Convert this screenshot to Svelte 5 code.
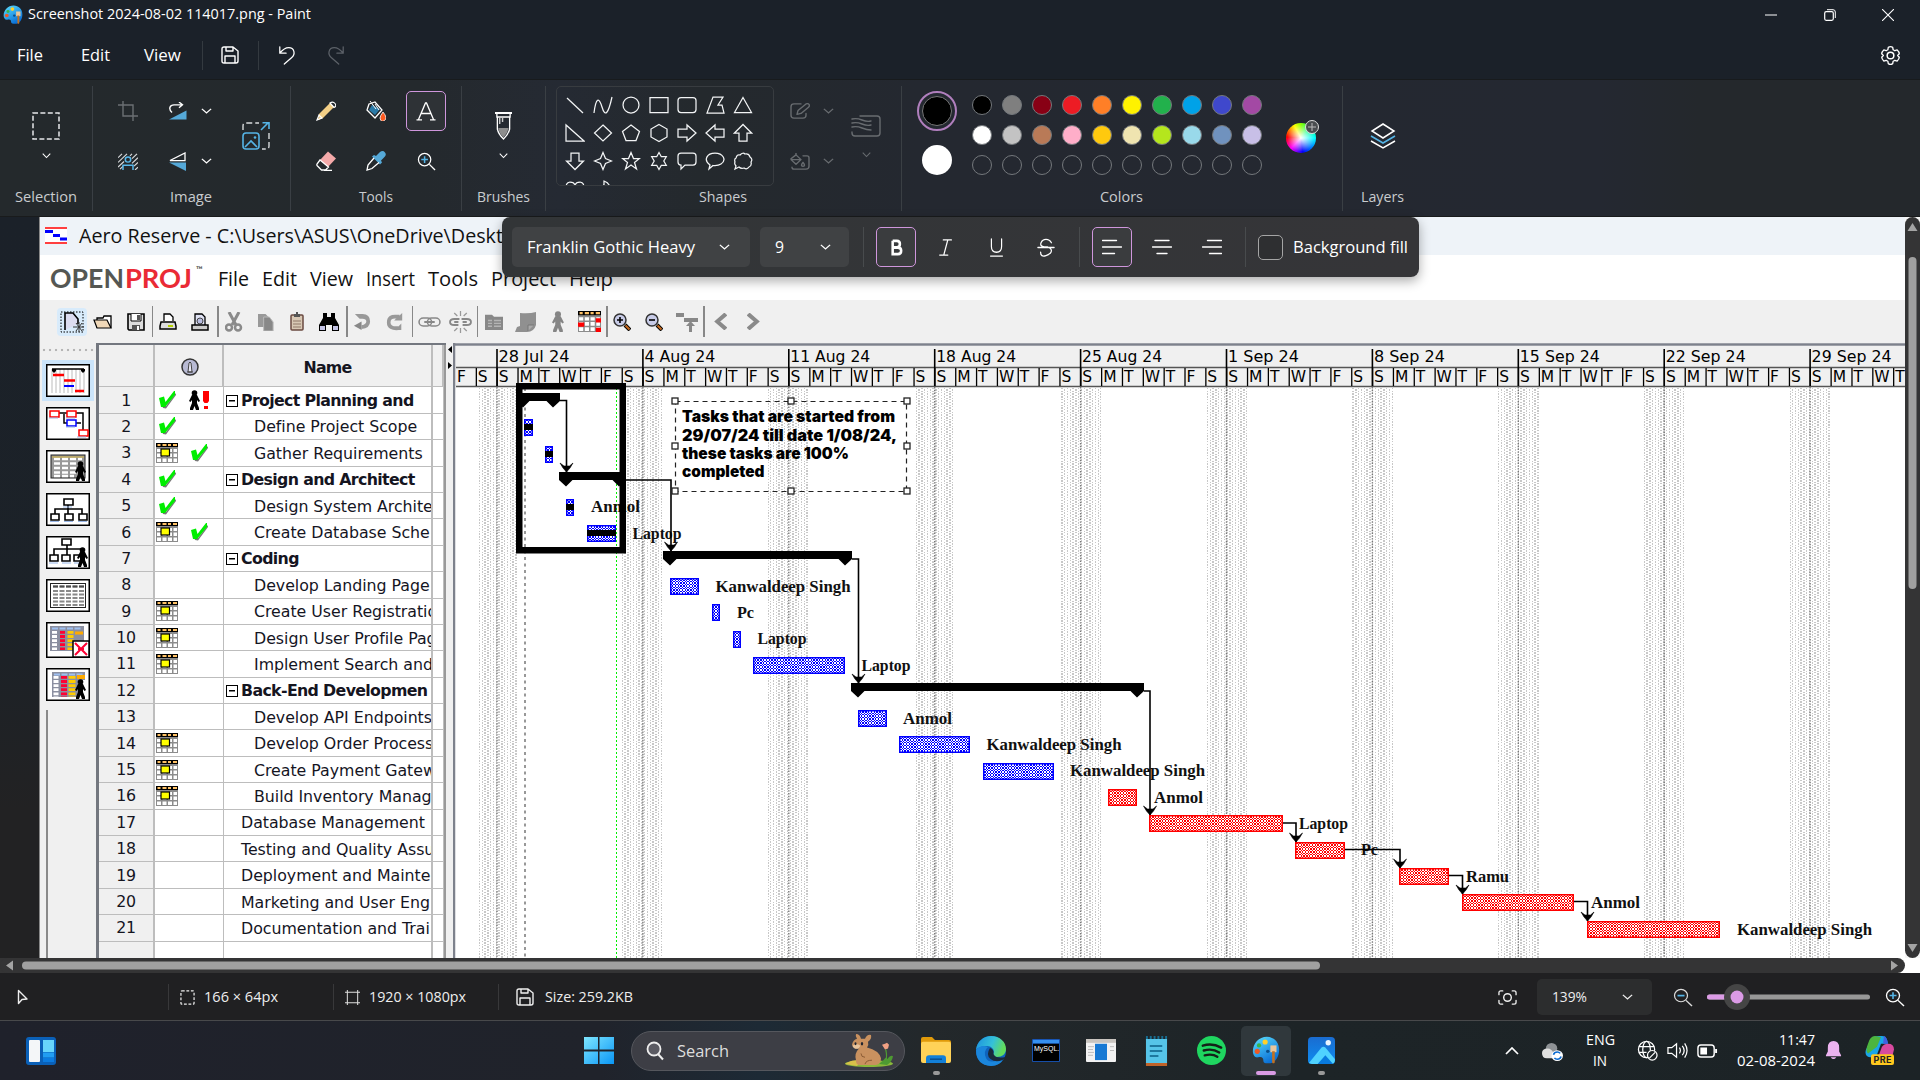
<script>
  const line = (d, extra = '') => `<path d="${d}" fill="none" stroke="currentColor" stroke-width="1.4" stroke-linejoin="round" stroke-linecap="round" ${extra}/>`;
  const person = (x, y, c = '#000') => `<g transform="translate(${x} ${y})" fill="${c}"><circle cx="5.5" cy="3" r="2.8"/><path d="M3 5h5l3 6-1.500 1-1.500-2v3l2 5v2H7l-1.500-4L4 20H1v-2l2-5v-3l-1.500 2L0 11z"/></g>`;
  const palette = `<defs><linearGradient id="pal" x1="0" y1="0" x2="0.600" y2="1"><stop offset="0" stop-color="#5ce1ff"/><stop offset="1" stop-color="#0a6fd6"/></linearGradient></defs><path d="M17 1C8 1 1 9 1 18c0 5 3 8 6 7 4-1 6 0 6 4 0 3 3 3 6 3 8 0 12-8 12-16C31 7 25 1 17 1z" fill="url(#pal)"/><circle cx="15" cy="7" r="3" fill="#ffd028"/><circle cx="8" cy="11" r="2.500" fill="#38b54a"/><circle cx="6" cy="18" r="3" fill="#ee5a24"/><circle cx="18" cy="18" r="2" fill="#0b4f8a"/><path d="M21 11h7v8h-7z" fill="#e8c69c"/><path d="M23 18h3v13q-1.500 2-3 0z" fill="#c07022"/>`;
  const save = line('M2 4q0-2 2-2h9l5 4v10q0 2-2 2H4q-2 0-2-2zM6 2v4h7V2M5 18v-7h10v7');
  const gridCal = (sel) => `<rect width="22" height="20" fill="#8c8c8c"/><rect width="22" height="4" fill="#000"/><path d="M1.500 2h3M6.500 2h4M12 2h3M17 2h4" stroke="#ffc266" stroke-width="2"/><path d="M1 6h4v3H1zM6.500 6h4v3h-4zM12 6h4v3h-4zM17.500 6h3.500v3h-3.500zM1 10.500h4v3.500H1zM6.500 10.500h4v3.500h-4zM12 10.500h4v3.500h-4zM17.500 10.500h3.500v3.500h-3.500zM1 15.500h4v3.500H1zM6.500 15.500h4v3.500h-4zM12 15.500h4v3.500h-4zM17.500 15.500h3.500v3.500h-3.500z" fill="#fff"/>${sel}`;

  const icons = {
    paint: ['0 0 32 34', palette],
    save: ['0 0 20 20', save],
    undo: ['0 0 20 22', line('M2 2v7h7M2 9Q7 3 12 3c6 0 8 7 3 11l-8 7', 'stroke-width="1.6"')],
    redo: ['0 0 20 22', line('M18 2v7h-7M18 9Q13 3 8 3C2 3 0 10 5 14l8 7')],
    gear: ['0 0 22 22', line('M8.700 2.500Q11 1 13.300 2.500l.500 2.500 1.800 1 2.400-.800q2 1.800 2.200 4L18.500 11l1.700 1.800q-.200 2.200-2.200 4l-2.400-.800-1.800 1-.500 2.500Q11 21 8.700 19.500L8.200 17l-1.800-1-2.400.800q-2-1.800-2.200-4L3.500 11 1.800 9.200q.200-2.200 2.200-4l2.400.800 1.800-1z') + '<circle cx="11" cy="11" r="3.500" fill="none" stroke="currentColor" stroke-width="1.600"/>'],
    min: ['0 0 12 12', '<path d="M0 6h12" stroke="currentColor"/>'],
    max: ['0 0 12 12', '<rect x=".700" y="2.700" width="8.600" height="8.600" rx="1.500" fill="none" stroke="currentColor" stroke-width="1.200"/><path d="M3 .700h6q2.300 0 2.300 2.300v6" fill="none" stroke="currentColor"/>'],
    close: ['0 0 12 12', '<path d="M0 0l12 12M12 0L0 12" stroke="currentColor" stroke-width="1.100"/>'],
    chev: ['0 0 10 6', '<path d="M.800 .800L5 5 9.200 .800" fill="none" stroke="currentColor" stroke-width="1.200"/>'],
    up: ['0 0 14 8', '<path d="M1 7l6-6 6 6" fill="none" stroke="currentColor" stroke-width="1.700"/>'],
    select: ['0 0 28 28', '<rect x="1" y="1" width="26" height="26" fill="none" stroke="#e6e8ea" stroke-width="1.500" stroke-dasharray="5 2.400"/>'],
    crop: ['0 0 20 20', '<path d="M5 0v15h15M0 4h15v16" fill="none" stroke="#6b6f73" stroke-width="1.400"/>'],
    removebg: ['0 0 20 18', '<path d="M0 5l4-4M0 10l9-9M0 15l6-6M2 17l4-4M12 3l2-2M14 6l5-5M14 11l6-6M16 14l4-4M17 18l3-3" stroke="#d8dadc" stroke-width="1.200"/><circle cx="10" cy="7" r="2.700" fill="#24292d" stroke="#59b8ea" stroke-width="1.500"/><path d="M5 18v-5h10v5" fill="#24292d" stroke="#59b8ea" stroke-width="1.500"/>'],
    rotate: ['0 0 18 20', '<path d="M0 18.500h17.500V9z" fill="#55a9d8"/><path d="M3 11C-1 7 1 3 5 3h8M10 0l3.500 3L10 6" fill="none" stroke="#fff" stroke-width="1.400"/>'],
    flip: ['0 0 18 20', '<path d="M1 9h15V1z" fill="none" stroke="#fff" stroke-width="1.300"/><path d="M0 11h17v9z" fill="#55a9d8"/>'],
    resize: ['0 0 28 28', '<path d="M1 8V4q0-3 3-3h13M27 11v13q0 3-3 3h-4" fill="none" stroke="#d8dadc" stroke-width="1.400" stroke-dasharray="6 3"/><path d="M19 8l8-8M20.500 .800H27V7" fill="none" stroke="#55b4e6" stroke-width="1.600"/><rect x="1" y="11" width="16" height="16" rx="3" fill="none" stroke="#55b4e6" stroke-width="1.600"/><path d="M3 25l6-6 6 6" fill="none" stroke="#55b4e6" stroke-width="1.600"/><circle cx="13" cy="15.500" r="1.300" fill="#55b4e6"/>'],
    pencil: ['0 0 20 20', '<path d="M3 13L14 2l4 4L7 17l-5 2z" fill="#f3cf86"/><path d="M14 2q3-2 5 .500t-1 4zM1 19l2-5 3 3z" fill="none" stroke="#fff" stroke-width="1.200"/>'],
    bucket: ['0 0 20 20', '<path d="M3 3l6-2 7 8-7 8-8-8z" fill="none" stroke="#fff" stroke-width="1.300"/><path d="M6 4l-3 5 6 5 5-6z" fill="#2a7aa8"/><path d="M4 0l6 8M9 3l4 6" stroke="#fff"/><path d="M17 11q5 6 1.500 8.500T14 17q0-2 3-6z" fill="#ff5a1f" stroke="#fff" stroke-width=".800"/>'],
    text: ['0 0 20 20', '<path d="M2.500 18.500L9.500 2h1l7 16.500M5.500 12.500h9M.500 18.800h5.500M14 18.800h5.500" fill="none" stroke="#fff" stroke-width="1.300"/>'],
    eraser: ['0 0 20 20', '<path d="M4 9L12 0.600 20 7.500 12 16z" fill="#f4a9a9"/><path d="M4 9l-3 4q-.500 1 .500 2l4 4h4l3-3zM8 19.300h8" fill="none" stroke="#fff" stroke-width="1.300"/>'],
    picker: ['0 0 20 20', '<path d="M10 5l4-4q3-2 5 .500t-1 5l-3 3 1 2-2 2-8-8 2-1.500z" fill="#55a9d8"/><path d="M8 7L2 14l-1 5 5-1.500 7-6" fill="none" stroke="#fff" stroke-width="1.300"/>'],
    zoomin: ['0 0 20 20', '<circle cx="8" cy="8" r="6.500" fill="none" stroke="#fff" stroke-width="1.300"/><path d="M13 13l6 6" stroke="#fff" stroke-width="1.400"/><path d="M4.500 8h7M8 4.500v7" stroke="#55b4e6" stroke-width="1.600"/>'],
    zoomout: ['0 0 20 20', '<circle cx="8" cy="8" r="6.500" fill="none" stroke="#ddd" stroke-width="1.200"/><path d="M13 13l6 6" stroke="#ddd" stroke-width="1.400"/><path d="M4.500 8h7" stroke="#55b4e6" stroke-width="1.800"/>'],
    brush: ['0 0 18 28', '<path d="M0 1h18" stroke="#fff" stroke-width="2"/><path d="M2 2v3h14V2M2.500 5v12q1 5 6.500 10 5.500-5 6.500-10V5" fill="none" stroke="#fff" stroke-width="1.400"/><path d="M5 5v7M8 5v5" stroke="#ccc" stroke-width="1.500"/><path d="M3.500 16h11q-1 5-5.500 9.500Q4 21 3.500 16z" fill="#8d8d8d"/>'],
    outline: ['0 0 20 18', line('M11 1H4Q1 1 1 4v9q0 3 3 3h9q3 0 3-3v-2M7 12l1-4 8-7q2-1 3 0.500t-.500 3L11 11z')],
    fill: ['0 0 20 18', line('M13 3h4q2 0 2 2v9q0 3-3 3H4q-2 0-2-2M1 6l5-4 5 5-5 5-5-5h9M6 2V0M13 10q3 4 0 4t0-4')],
    size: ['0 0 30 22', line('M9 1h17q3 0 3 3v14q0 3-3 3H4q-3 0-3-3v-1M1 4q5-1 10 1t9 1M1 8q5-1 10 1t9 1M1 12q5-1 10 1t9 2')],
    layers: ['0 0 26 26', '<path d="M13 1l11 7-11 7L2 8z" fill="none" stroke="#fff" stroke-width="1.500"/><path d="M1 13l12 7 12-7" fill="none" stroke="#55b4e6" stroke-width="1.600"/><path d="M1 18l12 7 12-7" fill="none" stroke="#fff" stroke-width="1.500"/>'],
    bold: ['0 0 20 20', '<path d="M5.500 3h5q3.500 0 3.500 3.300T10.500 10M5.500 10h6q4 0 4 3.500T11.500 17h-6zV3" fill="none" stroke="#fff" stroke-width="3"/>'],
    italic: ['0 0 20 20', line('M7 2h9M3 18h9M12 2L7.500 18')],
    under: ['0 0 20 20', line('M4 1v8q0 6 6 6t6-6V1M3 19h14')],
    strike: ['0 0 20 20', line('M16 5Q14 1.500 10 1.500T4.500 5 8 9.500h4q4 1 4 4T10 18.500 4 15M1 10h18')],
    left: ['0 0 20 16', line('M.500 1.500h14M.500 8h19M.500 14.500h12')],
    center: ['0 0 20 16', line('M3 1.500h14M.500 8h19M5 14.500h10')],
    right: ['0 0 20 16', line('M5.500 1.500h14M.500 8h19M7.500 14.500h12')],
    // application toolbar
    aero: ['0 0 22 17', '<path d="M0 0h22v17H0z" fill="#fff"/><path d="M0 1h22M0 16h22" stroke="#f00" stroke-width="1.600"/><path d="M0 3h8v3H0zM8 7h7v3H8zM15 10.500h7v3h-7z" fill="#00f"/>'],
    anew: ['0 0 24 22', '<rect x="1" y="1" width="22" height="20" fill="none" stroke="#000" stroke-dasharray="1.500 1.500"/><path d="M5 19V2h8l5 6v5" fill="#dcdcf0" stroke="#000" stroke-width="1.600"/><path d="M16 12l6 8M22 12l-6 8M13 16h11M19 11v10" stroke="#333"/>'],
    aopen: ['0 0 20 14', '<path d="M4 3h6l1-2h7v11H4z" fill="#fff" stroke="#000" stroke-width="1.300"/><path d="M1 5h13l4 8H4z" fill="#f0d8b8" stroke="#000" stroke-width="1.200"/>'],
    asave: ['0 0 18 18', '<path d="M1 1h16v16H2l-1-1z" fill="#ddd" stroke="#000" stroke-width="1.600"/><path d="M4 1v7h10V1" fill="#fff" stroke="#000"/><path d="M10 2h3v5h-3zM5 12h8v5H5z" fill="#555"/><path d="M10 13h2v4h-2z" fill="#fff"/>'],
    aprint: ['0 0 18 18', '<path d="M5 8V1h6l3 3v4" fill="#fff" stroke="#000" stroke-width="1.300"/><path d="M2 9h14l1 4v3H1v-3z" fill="#ddd" stroke="#000" stroke-width="1.500"/><path d="M9 13h5" stroke="#b4d000" stroke-width="2"/>'],
    apreview: ['0 0 18 18', '<path d="M4 12V1h7l3 3v8" fill="#dfe2f4" stroke="#000" stroke-width="1.300"/><circle cx="9" cy="8" r="3" fill="#b9bde0" stroke="#444"/><path d="M1 12h16v5H1z" fill="#ccc" stroke="#000" stroke-width="1.500"/>'],
    cut: ['0 0 18 20', '<path d="M4 0l7 13M14 0L7 13" stroke="#8a8a8a" stroke-width="3"/><circle cx="4" cy="15.500" r="3" fill="none" stroke="#8a8a8a" stroke-width="2.500"/><circle cx="13" cy="15.500" r="3" fill="none" stroke="#8a8a8a" stroke-width="2.500"/>'],
    copy: ['0 0 18 18', '<path d="M0 1h8l3 3v10H0z" fill="#999"/><path d="M6 4h6l4 5v9H6z" fill="#888" stroke="#bbb"/>'],
    paste: ['0 0 14 19', '<rect x="1" y="3" width="12" height="15" rx="1" fill="#d8c8b4" stroke="#6a4a40" stroke-width="1.500"/><path d="M4 5V2h2V0h2v2h2v3z" fill="#555"/><path d="M3 9h8M3 12h8M3 15h8" stroke="#907868"/>'],
    find: ['0 0 20 20', '<path d="M4 1h4v4h4V1h4v5l4 7v6h-7v-6H7v6H0v-6l4-7z" fill="#000"/><path d="M1 14h5v4H1zM14 14h5v4h-5z" fill="#c4c4e6"/>'],
    aundo: ['0 0 20 20', '<path d="M2 2h8q8 0 8 8 0 7-9 8v-4q5-1 5-4 0-3-4-3H7z" fill="#999"/><path d="M9 10v9l-8-4.500z" fill="#888"/>'],
    aredo: ['0 0 20 20', '<path d="M14 17Q3 18 3 11t9-6h3" fill="none" stroke="#999" stroke-width="4"/><path d="M18 1v8h-9zM17 12v7h-7z" fill="#999"/>'],
    link: ['0 0 22 10', '<rect x="1" y="1" width="12" height="8" rx="4" fill="none" stroke="#888" stroke-width="1.500"/><rect x="9" y="1" width="12" height="8" rx="4" fill="none" stroke="#888" stroke-width="1.500"/><path d="M6 5h10" stroke="#888" stroke-width="2"/>'],
    unlink: ['0 0 22 22', '<path d="M10 8H5q-4 0-4 3t4 3h4M12 8h5q4 0 4 3t-4 3h-4M5 11h4M13 11h4" fill="none" stroke="#888" stroke-width="1.800"/><path d="M5 2l3 3M11 0v5M17 2l-3 3M5 20l3-3M11 22v-5M17 20l-3-3" stroke="#999" stroke-width="1.200"/>'],
    info: ['0 0 20 20', '<path d="M1 3h7l2 2h9v14H1z" fill="#888"/><path d="M4 9h4M10 9h7M4 12h4M10 12h7M4 15h4M10 15h7" stroke="#b5b5b5" stroke-width="1.500"/>'],
    note: ['0 0 22 20', '<path d="M5 1q9 1 16-1v13q-2 7-9 7H0l2-5 3-1z" fill="#909090"/><path d="M13 19v-6h6" fill="#aaa" stroke="#777"/>'],
    aperson: ['0 0 12 20', person(0, 0, '#858585')],
    acal: ['0 0 22 20', gridCal('<path d="M17 7h5v4h-5zM0 11h6v4H0zM17 16h5v4h-5z" fill="#f00"/>')],
    azin: ['0 0 18 18', '<circle cx="7" cy="7" r="6" fill="#c8cce8" stroke="#333" stroke-width="1.500"/><path d="M4 7h6M7 4v6" stroke="#000" stroke-width="1.600"/><path d="M12 12l5 5" stroke="#000" stroke-width="4"/><path d="M12.500 12.500l4 4" stroke="#c76a20" stroke-width="2"/>'],
    azout: ['0 0 18 18', '<circle cx="7" cy="7" r="6" fill="#c8cce8" stroke="#333" stroke-width="1.500"/><path d="M4 7h6" stroke="#000" stroke-width="1.600"/><path d="M12 12l5 5" stroke="#000" stroke-width="4"/><path d="M12.500 12.500l4 4" stroke="#c76a20" stroke-width="2"/>'],
    goto: ['0 0 22 20', '<path d="M0 1h8v4H0zM8 6h14v4H8zM13 12h3v8h-3z" fill="#888"/><path d="M10 14l4.500-5 4.500 5z" fill="#888"/>'],
    prev: ['0 0 12 18', '<path d="M11 1L3 9l8 8" fill="none" stroke="#8a8a8a" stroke-width="4"/>'],
    next: ['0 0 12 18', '<path d="M1 1l8 8-8 8" fill="none" stroke="#8a8a8a" stroke-width="4"/>'],
    // grid indicators
    check: ['0 0 18 20', '<path d="M2 10l3 8 3 .500L18 5v-2L8 16z" fill="#777"/><path d="M1 8l5-1.500L7.500 12 16 1h1v4L7 17H3z" fill="#0e0"/>'],
    calendar: ['0 0 22 20', gridCal('<rect x="5" y="6" width="8.500" height="7" fill="#ff0" stroke="#000" stroke-width="1.200"/>')],
    over: ['0 0 22 20', person(1, 0) + '<path d="M15 1h6v10l-1.500 2h-3L15 11zM16 16h4v3h-4z" fill="#f00"/>'],
    badge: ['0 0 18 18', '<circle cx="9" cy="9" r="8" fill="#b8bad4" stroke="#333" stroke-width="1.500"/><path d="M7 14l1-9q1-2 2 0l1 9zM6 14h6" fill="#e8e8f5" stroke="#444"/>'],
    // view sidebar
    v0: ['0 0 44 33', '<path d="M5 4h35v26H5z" fill="#fff"/><path d="M6 5v24M10 5v24M14 5v24M18 5v24M22 5v24M26 5v24M30 5v24M34 5v24M38 5v24" stroke="#bbb"/><path d="M6 5h32" stroke="#000" stroke-width="1.500"/><path d="M6 5h4v2l-2 2-2-2zM35 5h4v2l-2 2-2-2z"/><path d="M7 11h11M18 16.500h11M29 27h9" stroke="#f00" stroke-width="2.500"/><path d="M18 22h10" stroke="#00f" stroke-width="2"/>'],
    v1: ['0 0 44 33', '<path d="M13 6h24v17M18 7v9h17" fill="none" stroke="#000" stroke-width="1.500"/><path d="M4 4h9v6H4zM21 4h9v6h-9zM33 23h9v6h-9z" fill="#fff" stroke="#f00" stroke-width="1.500"/><path d="M21 13h9v6h-9z" fill="#fff" stroke="#00f" stroke-width="1.500"/><path d="M3 11h9M20 11h9M20 20h9M31 30h9" stroke="#9ab8e8"/>'],
    v2: ['0 0 44 33', '<rect x="5" y="5" width="34" height="23" fill="#999" stroke="#222"/><path d="M8 9h28M8 13.500h28M8 18h28M8 22.500h28M8 26h20" stroke="#fff" stroke-width="2.500" stroke-dasharray="6 2"/><path d="M6 7h32" stroke="#d6b53c"/>' + person(29, 11)],
    v3: ['0 0 44 33', '<path d="M22 12v9M9 21v-5h27v5" fill="none" stroke="#000" stroke-width="1.600"/><path d="M18 6h9v6h-9zM5 21h8v6H5zM19 21h8v6h-8zM33 21h8v6h-8z" fill="#fff" stroke="#000" stroke-width="1.600"/><path d="M17 14h9M4 28.500h9M18 28.500h9M32 28.500h9" stroke="#9ab8e8"/>'],
    v4: ['0 0 44 33', '<path d="M21 9v10M8 19v-6h27v5" fill="none" stroke="#000" stroke-width="1.600"/><path d="M16 3h9v6h-9zM4 19h8v6H4zM16 19h8v6h-8zM28 19h8v6h-8z" fill="#fff" stroke="#000" stroke-width="1.600"/><path d="M3 27h9M16 27h9M28 27h5" stroke="#9ab8e8"/>' + person(31, 11)],
    v5: ['0 0 44 33', '<rect x="4.500" y="4.500" width="35" height="24" fill="#fff" stroke="#222"/><path d="M7 8h31M7 12h31M7 15.500h31M7 19h31M7 22.500h31M7 26h31" stroke="#888" stroke-width="2" stroke-dasharray="5 1.500"/><path d="M7 7h31" stroke="#111" stroke-dasharray="5 1.500"/>'],
    v6: ['0 0 44 36', '<rect x="4" y="4" width="34" height="25" fill="#8b8fa0"/><path d="M6 6.500h30" stroke="#9fc0f0" stroke-dasharray="6 1.500" stroke-width="2"/><path d="M8.500 9v19" stroke="#fff" stroke-width="5" stroke-dasharray="2.800 1.300"/><path d="M16.500 9v19" stroke="#f03" stroke-width="5" stroke-dasharray="2.800 1.300"/><path d="M24.500 9v19" stroke="#fc0" stroke-width="6" stroke-dasharray="2.800 1.300"/><path d="M29 11h8" stroke="#fa0" stroke-width="3"/><rect x="27" y="19" width="16" height="16" fill="#fff" stroke="#000" stroke-width="1.500"/><path d="M29 21l12 12M41 21L29 33M32 27h6" stroke="#f03" stroke-width="2"/>'],
    v7: ['0 0 44 33', '<rect x="6" y="4" width="33" height="25" fill="#8b8fa0"/><path d="M8 6.500h30" stroke="#9fc0f0" stroke-dasharray="6 1.500" stroke-width="2"/><path d="M10 8v21" stroke="#fff" stroke-width="5" stroke-dasharray="2.800 1.300"/><path d="M18 8v21" stroke="#f03" stroke-width="6" stroke-dasharray="2.800 1.300"/><path d="M26 8v21" stroke="#fc0" stroke-width="7" stroke-dasharray="2.800 1.300"/><path d="M31 9h8" stroke="#fa0" stroke-width="4"/><path d="M32 12h8v17h-8z" fill="#fff"/>' + person(29, 11)],
    // status bar
    cursor: ['0 0 11 16', line('M1.500 1.500v13l3.500-4 5-.500z')],
    dashed: ['0 0 16 16', '<rect x="1" y="1" width="14" height="14" rx="1" fill="none" stroke="#eee" stroke-width="1.300" stroke-dasharray="3 1.800"/>'],
    artboard: ['0 0 16 16', '<path d="M2.500 0v16M13.500 0v16M0 2.500h16M0 13.500h16" stroke="#ddd" stroke-width="1.100"/>'],
    focus: ['0 0 20 16', line('M1 5V3q0-2 2-2h2M15 1h2q2 0 2 2v2M19 11v2q0 2-2 2h-2M5 15H3q-2 0-2-2v-2') + '<circle cx="10" cy="8" r="4" fill="none" stroke="currentColor" stroke-width="1.500"/>'],
    // taskbar
    widgets: ['0 0 30 28', '<rect width="30" height="28" rx="3" fill="#0a60b8"/><rect x="3" y="3" width="11" height="22" rx="1" fill="#f4f6f8"/><rect x="17" y="3" width="11" height="12" fill="#67d5fb"/><rect x="17" y="15.500" width="11" height="5" fill="#219df2"/><rect x="17" y="21" width="11" height="4" fill="#0b7be0"/>'],
    start: ['0 0 30 30', '<defs><linearGradient id="win" x1="0" y1="0" x2="1" y2="1"><stop offset="0" stop-color="#7ee6ff"/><stop offset="1" stop-color="#0a96f5"/></linearGradient></defs><path d="M0 1h14v13H0zM15.500 1H30v13H15.500zM0 16h14v13H0zM15.500 16H30v13H15.500z" fill="url(#win)"/>'],
    search: ['0 0 20 20', '<circle cx="9" cy="8" r="6.500" fill="#5b5b63" stroke="#eee" stroke-width="1.800"/><path d="M13 13l5 5.500" stroke="#eee" stroke-width="2"/>'],
    quokka: ['0 0 52 34', '<ellipse cx="26" cy="30.500" rx="24" ry="3.500" fill="#8ab83a"/><path d="M2 31q8-6 16-3l-4 5z" fill="#d9c04a"/><path d="M36 31q4-3 7-7 0-5-1-8h1.500q1 5 .500 10 4-5 6-3-1 6-6 9z" fill="#4e9a32"/><path d="M42 16l-3-5 3-1 2-1 2 2-1 4z" fill="#f2a184"/><path d="M13 27q-2-7 3-12-6 0-7-4 1-5 5-6-2-3-1-5 4 0 5 5h4q2-5 6-4 1 4-3 7 1 3-1 6 12 3 14 11 0 6-5 7H16q-3-1-3-4z" fill="#c9915f"/><path d="M9.500 12q1 4 6 3l2-3q-4-3-8 0z" fill="#e8c49c"/><ellipse cx="19" cy="10" rx="1.200" ry="1.800" fill="#1f2430"/><ellipse cx="12.500" cy="10" rx="1" ry="1.500" fill="#1f2430"/><path d="M18 20q0 4 4 4M22 31q1-4 7-4" stroke="#8a5a34" fill="none"/>'],
    explorer: ['0 0 30 28', '<path d="M0 2q0-2 2-2h9l3 3h14q2 0 2 2v6H0z" fill="#e09a0a"/><rect y="5" width="30" height="22" rx="2" fill="#ffd258"/><path d="M5 27v-5q0-3 3-3h14q3 0 3 3v5z" fill="#1380d8"/><path d="M9 23h12" stroke="#0a4c8c" stroke-width="1.500"/>'],
    edge: ['0 0 30 30', '<defs><linearGradient id="ed" x1="0" y1="0" x2="1" y2=".300"><stop offset="0" stop-color="#1b8fe0"/><stop offset=".600" stop-color="#35c1d8"/><stop offset="1" stop-color="#62dc5c"/></linearGradient></defs><circle cx="15" cy="15" r="15" fill="#0f63bd"/><path d="M0 14C1 5 8 0 15 0c9 0 15 6 15 13 0 5-4 8-9 8-3 0-4-1-4-2l1-3c0-3-3-6-7-6S2 11 0 14z" fill="url(#ed)"/><path d="M12 11q-5 4-2 11t18 0q-4 8-13 8Q0 29 0 14q5-6 12-3z" fill="#1b86dc"/><path d="M14 12q4 1 3.500 6 2 5 12 3-1 2-3 3-7 3-12-1t-.500-11z" fill="#1a2a3c"/>'],
    mysql: ['0 0 28 24', '<rect width="28" height="24" rx="1" fill="#1752b0"/><rect x="1" y="1" width="26" height="3.500" fill="#3590f0"/><rect x="1" y="5" width="26" height="18" fill="#000"/><text x="2" y="12.500" font-size="7" fill="#fff" font-family="Liberation Sans">MySQL.</text>'],
    appwin: ['0 0 30 24', '<rect width="30" height="24" rx="1" fill="#f2f2f2"/><rect width="30" height="4" fill="#c9c5c0"/><path d="M2 8h6M2 11h5M2 14h6M2 17h5M24 8h4M24 12h4" stroke="#bbb"/><rect x="9" y="5" width="12" height="17" fill="#1779d4"/>'],
    notepad: ['0 0 24 30', '<path d="M2 0v4M6 0v4M10 0v4M14 0v4M18 0v4M22 0v4" stroke="#176c90" stroke-width="2"/><rect x="1" y="3" width="22" height="24" fill="#56c4e8"/><path d="M5 10h13M5 15h13M5 20h9" stroke="#0c5f86" stroke-width="1.600"/><path d="M1 27h22v3H1z" fill="#c0632a"/>'],
    spotify: ['0 0 30 30', '<circle cx="15" cy="15" r="15" fill="#1fd660"/><path d="M6 10q10-3 19 2M7 15q9-2.500 16 2M8 20q8-2 13 1.500" fill="none" stroke="#142018" stroke-width="2.500" stroke-linecap="round"/>'],
    photos: ['0 0 28 28', '<defs><linearGradient id="ph" x1="0" y1="0" x2="0" y2="1"><stop offset="0" stop-color="#1a6cd0"/><stop offset="1" stop-color="#0e8cf0"/></linearGradient></defs><rect width="28" height="28" rx="4" fill="url(#ph)"/><path d="M1 27L14 11q2-2 4 0l10 12q0 5-4 5H4z" fill="#4fd2ff"/><path d="M10 28l8-9 8 9z" fill="#087ade"/><circle cx="21" cy="6" r="2.800" fill="#e8f4ff"/>'],
    cloud: ['0 0 22 20', '<circle cx="10" cy="6" r="6" fill="#8e9295"/><path d="M0 11q0-5 6-5 4 0 6 5v6H5q-5 0-5-6z" fill="#e0e0e0"/><circle cx="16" cy="14" r="6" fill="#fff"/><path d="M12 13q1-3 4-3 2 0 3 1.500M20 15q-1 3-4 3-2 0-3-1.500" fill="none" stroke="#0a6ad0" stroke-width="1.700"/>'],
    globe: ['0 0 22 22', '<g fill="none" stroke="#fff" stroke-width="1.300"><circle cx="10" cy="10" r="8.500"/><ellipse cx="10" cy="10" rx="4" ry="8.500"/><path d="M2 7h16M2 13h8"/></g><circle cx="16" cy="16" r="5" fill="#1c2326" stroke="#fff" stroke-width="1.300"/><path d="M13 19l6-6" stroke="#fff" stroke-width="1.300"/>'],
    sound: ['0 0 22 18', '<path d="M1 6h4l5-4v14l-5-4H1zM13 6q2 3 0 6M16 4q4 5 0 10M18.500 1.500q5 7.500 0 15" fill="none" stroke="#fff" stroke-width="1.300"/>'],
    battery: ['0 0 22 14', '<rect x="1" y="1" width="17" height="12" rx="3" fill="none" stroke="#fff" stroke-width="1.500"/><rect x="3.500" y="3.500" width="7" height="7" fill="#fff"/><path d="M20 5v4" stroke="#fff" stroke-width="2"/>'],
    bell: ['0 0 18 20', '<path d="M9 0q6 0 6 7v4l2 4v1H1v-1l2-4V7q0-7 6-7zM6 17h6q-3 4-6 0z" fill="#ecb3f0"/>'],
    copilot: ['0 0 30 30', '<path d="M7 2q2-2 7-2h3q4 0 5 4l1 4h-7l-5 14H5q-6-1-4-8z" fill="#1aa6e8"/><path d="M3 8Q5 0 10 0l6 1-4 10-9 7q-3-3 0-10z" fill="#4cb53e"/><path d="M13 22l4-11q2-3 6-3 6 0 6 6-2 10-6 13h-7z" fill="#d84aa0"/><path d="M19 0q3 1 4 8h-5z" fill="#4060e0"/><rect x="6" y="19" width="23" height="11" rx="2" fill="#ffc81e"/><text x="8.500" y="27.800" font-size="9" font-weight="700" textLength="18" fill="#222" font-family="Inter">PRE</text>'],
  };

  const shapes = [
    'M2 3l16 15', 'M1 18C3 2 6 2 9 12s6 8 10-10', 'M18 10A8 8 0 1 1 2 10 8 8 0 0 1 18 10z', 'M1 2.500h18v15H1z', 'M4 2.500h12q3 0 3 3v9q0 3-3 3H4q-3 0-3-3v-9q0-3 3-3z', 'M8 2h10l-5 8h4l2 8H2z', 'M10 2.500L18.500 17.500h-17z',
    'M1 2v16h18z', 'M10 2l8.500 8-8.500 8-8.500-8z', 'M10 2l8.500 6.500L15 17.500H5L1.500 8.500z', 'M10 1.500l8 4.500v8l-8 4.500L2 14V6z', 'M1 6h9V2l9 8-9 8v-4H1z', 'M19 6h-9V2L1 10l9 8v-4h9z', 'M6 18v-8H1.500L10 1.500 18.500 10H14v8z',
    'M6 2v8H1.500l8.500 8.500 8.500-8.500H14V2z', 'M10 1.500l2.500 6 6 2.500-6 2.500-2.500 6-2.500-6-6-2.500 6-2.500z', 'M10 1.500l2.500 6h6L13.500 11.500l2 6.500L10 14l-5.500 4 2-6.500-5-4h6z', 'M10 1.500l2.300 4.200h5L14.800 10l2.500 4.300h-5L10 18.500l-2.300-4.200h-5L5.200 10 2.700 5.700h5z', 'M4 2h12q3 0 3 3v6q0 3-3 3H8l-4 4v-4q-3 0-3-3V5q0-3 3-3z', 'M5 14C-2 9 2 2 10 2s12 7 6 11q-3 2-8 1.500L4 18z', 'M3 15q-2-2-1-4-1-3 1-4 1-4 4-3 3-3 5-1 4-1 5 3 3 2 1 5 1 4-2 5-2 3-5 1-3 1-5-1l-4 2z',
    'M10 18L2 9Q0 4 5 3q4 0 5 3 1-3 5-3 5 1 3 6z', 'M11 18V2q6 2 6 8M11 5L7 18',
  ];
  const swatches = ['#000', '#7f7f7f', '#880015', '#ed1c24', '#ff7f27', '#fff200', '#22b14c', '#00a2e8', '#3f48cc', '#a349a4', '#fff', '#c3c3c3', '#b97a57', '#ffaec9', '#ffc90e', '#efe4b0', '#b5e61d', '#99d9ea', '#7092be', '#c8bfe7', ...Array(10).fill('transparent')];

  const tools = [
    ['anew', 24, 22, 72], ['aopen', 20, 14, 103], ['asave', 18, 18, 135.5], ['|', 0, 0, 152.5], ['aprint', 18, 18, 168], ['apreview', 18, 18, 200], ['|', 0, 0, 218], ['cut', 18, 20, 234], ['copy', 17, 18, 266], ['paste', 14, 19, 297], ['find', 20, 20, 329], ['|', 0, 0, 347], ['aundo', 19, 19, 362], ['aredo', 18, 19, 395], ['|', 0, 0, 412.5], ['link', 23, 10, 429], ['unlink', 23, 22, 460], ['|', 0, 0, 477.5], ['info', 20, 19, 493.5], ['note', 22, 20, 526], ['aperson', 13, 21, 558], ['acal', 23, 21, 589.5], ['|', 0, 0, 607], ['azin', 18, 18, 622], ['azout', 18, 18, 654], ['goto', 22, 20, 687], ['|', 0, 0, 704], ['prev', 13, 17, 720], ['next', 13, 17, 753],
  ].map(([n, w, h, c], i, a) => ({ n, w, h, cell: i === 0 ? 28 : c - a[i - 1][3] }));
  // Column tracks are the gaps between neighbouring icon centres.
  const toolTracks = tools.map((t) => t.cell + 'px').join(' ');

  const rows = [
    ['Project Planning and', 0, 'check', 'over'], ['Define Project Scope', 2, 'check'], ['Gather Requirements', 2, 'calendar', 'check'], ['Design and Architect', 0, 'check'], ['Design System Archite', 2, 'check'], ['Create Database Sche', 2, 'calendar', 'check'], ['Coding', 0], ['Develop Landing Page', 2], ['Create User Registratio', 2, 'calendar'], ['Design User Profile Pag', 2, 'calendar'], ['Implement Search and', 2, 'calendar'], ['Back-End Developmen', 0], ['Develop API Endpoints', 2], ['Develop Order Process', 2, 'calendar'], ['Create Payment Gatew', 2, 'calendar'], ['Build Inventory Manage', 2, 'calendar'], ['Database Management', 1], ['Testing and Quality Assu', 1], ['Deployment and Mainten', 1], ['Marketing and User Eng', 1], ['Documentation and Trai', 1],
  ];

  // Two-tone dither cells, scaled 1.4x and snapped to whole pixels.
  const snap = (i) => Math.round(i * 1.4);
  const dither = (n, on) => {
    let d = '';
    for (let i = 0; i < n; i++) for (let j = 0; j < n; j++) if (on(i, j)) d += `M${snap(i)} ${snap(j)}H${snap(i + 1)}V${snap(j + 1)}H${snap(i)}z`;
    return d;
  };
  const barDots = dither(10, (i, j) => (i + j) % 2 === 1);
  const weekendDots = dither(20, (i, j) => i % 2 === 0 && (j + i / 2) % 2 === 0);

  const weeks = ['28 Jul 24', '4 Aug 24', '11 Aug 24', '18 Aug 24', '25 Aug 24', '1 Sep 24', '8 Sep 24', '15 Sep 24', '22 Sep 24', '29 Sep 24'];
  const weekX = (i) => 497 + i * 145.9;
  const days = Array.from({ length: 70 }, (_, i) => ({ x: 455.5 + i * 20.843, d: 'FSSMTWT'[i % 7] })).filter((d) => d.x < 1900);
  const summaries = [[516, 560, 393], [559, 626, 472], [663, 852, 551], [851, 1144, 683]];
  const bars = [
    [524, 533, 419, 1], [545, 553, 446, 1], [566, 574, 499, 1], [587, 616, 525, 1],
    [670, 699, 578], [712, 720, 604], [733, 741, 631], [753, 845, 657], [858, 887, 710], [899, 970, 736], [983, 1054, 763],
    [1108, 1137, 789, 2], [1149, 1283, 815, 2], [1295, 1345, 842, 2], [1399, 1449, 868, 2], [1462, 1574, 894, 2], [1587, 1720, 921, 2],
  ];
  const labels = [[591, 512, 'Anmol'], [632.5, 539, 'Laptop'], [715.5, 592, 'Kanwaldeep Singh'], [737, 618, 'Pc'], [757.5, 644, 'Laptop'], [861.5, 671, 'Laptop'], [903, 724, 'Anmol'], [986.5, 750, 'Kanwaldeep Singh'], [1070, 776, 'Kanwaldeep Singh'], [1154, 803, 'Anmol'], [1299, 829, 'Laptop'], [1361, 855, 'Pc'], [1466, 882, 'Ramu'], [1591, 908, 'Anmol'], [1737, 935, 'Kanwaldeep Singh']];
  const labelW = { Anmol: 49, Laptop: 49, Pc: 17, Ramu: 43, 'Kanwaldeep Singh': 135 };
  const links = [[560, 400.5, 566.5, 472], [626, 480, 671, 551], [852, 559, 858.5, 683], [1144, 691, 1150, 815], [1283, 823, 1296, 842], [1345, 849.5, 1400, 868], [1449, 875.5, 1462.5, 894], [1574, 901.5, 1587.5, 921]];
  const note = [[422, 213, 'Tasks that are started from'], [440.5, 215, '29/07/24 till date 1/08/24,'], [459, 167, 'these tasks are 100%'], [477, 82.5, 'completed']];
  const handles = [[675, 401], [791, 401], [907, 401], [675, 446], [907, 446], [675, 491], [791, 491], [907, 491]];
</script>

{#snippet ic(name, w, h)}
  <svg class="ic" width={w} height={h} viewBox={icons[name][0]} preserveAspectRatio="none">{@html icons[name][1]}</svg>
{/snippet}

{#snippet fit(text, w, size)}
  <svg class="fit" width={w} height={size * 1.4}><text x="0" y={size * 1.06} font-size={size} textLength={w} lengthAdjust="spacingAndGlyphs">{text}</text></svg>
{/snippet}

<div class="screen">
  <header class="titlebar">
    {@render ic('paint', 20, 20)}
    <div class="doc">{@render fit('Screenshot 2024-08-02 114017.png - Paint', 283, 14.6)}</div>
    <div class="wbtns">{@render ic('min', 12, 12)}{@render ic('max', 12, 12)}{@render ic('close', 12, 12)}</div>
  </header>

  <nav class="menubar">
    <span>{@render fit('File', 26, 16.5)}</span>
    <span>{@render fit('Edit', 29, 16.5)}</span>
    <span>{@render fit('View', 37, 16.5)}</span>
    <i></i>
    <span class="msave">{@render ic('save', 20, 20)}</span>
    <i></i>
    <span class="mundo">{@render ic('undo', 18, 20)}</span>
    <span class="mredo">{@render ic('redo', 18, 20)}</span>
    <span class="mgear">{@render ic('gear', 21, 21)}</span>
  </nav>

  <section class="ribbon">
    <div class="group g-sel">
      <div class="body stack">{@render ic('select', 28, 28)}{@render ic('chev', 9, 5.5)}</div>
      <div class="cap">{@render fit('Selection', 62, 14.8)}</div>
    </div>
    <div class="group g-img">
      <div class="body imggrid">
        {@render ic('crop', 20, 20)}{@render ic('rotate', 18, 19)}{@render ic('chev', 11, 6)}
        <div class="resize">{@render ic('resize', 28, 28)}</div>
        {@render ic('removebg', 20, 17)}{@render ic('flip', 18, 19)}{@render ic('chev', 11, 6)}
      </div>
      <div class="cap nudge">{@render fit('Image', 42, 14.8)}</div>
    </div>
    <div class="group g-tools">
      <div class="body toolgrid">
        {@render ic('pencil', 20, 20)}{@render ic('bucket', 20, 20)}<div class="on">{@render ic('text', 20, 20)}</div>
        {@render ic('eraser', 20, 20)}{@render ic('picker', 20, 20)}{@render ic('zoomin', 19, 19)}
      </div>
      <div class="cap">{@render fit('Tools', 34, 14.8)}</div>
    </div>
    <div class="group g-brush">
      <div class="body stack">{@render ic('brush', 17, 28)}{@render ic('chev', 9, 5.5)}</div>
      <div class="cap">{@render fit('Brushes', 53, 14.8)}</div>
    </div>
    <div class="group g-shapes">
      <div class="body shapesrow">
        <div class="shapebox">
          {#each shapes as d}
            <svg width="20" height="20" viewBox="0 0 20 20"><path {d} fill="none" stroke="#f2f4f5" stroke-width="1.25" /></svg>
          {/each}
        </div>
        <div class="dim pairs">{@render ic('outline', 20, 17)}{@render ic('chev', 11, 6)}{@render ic('fill', 20, 17)}{@render ic('chev', 11, 6)}</div>
        <div class="dim stack sizes">{@render ic('size', 30, 22)}{@render ic('chev', 9, 5.5)}</div>
      </div>
      <div class="cap">{@render fit('Shapes', 48, 14.8)}</div>
    </div>
    <div class="group g-colors">
      <div class="body colorrow">
        <div class="current"><div class="ring"><b></b></div><u></u></div>
        <div class="swatches">{#each swatches as c}<span style:background={c}></span>{/each}</div>
        <div class="wheel"><svg class="plus" width="14" height="14" viewBox="0 0 14 14"><circle cx="7" cy="7" r="6.500" fill="#4a4d50" stroke="#ddd" /><path d="M7 3v8M3 7h8" stroke="#bbb" /></svg></div>
      </div>
      <div class="cap nudge">{@render fit('Colors', 43, 14.8)}</div>
    </div>
    <div class="group g-layers">
      <div class="body stack lay">{@render ic('layers', 26, 26)}</div>
      <div class="cap nudge">{@render fit('Layers', 43, 14.8)}</div>
    </div>
  </section>

  <main class="workspace">
    <div class="canvas">
      <div class="apptitle">{@render ic('aero', 22, 17)}{@render fit('Aero Reserve - C:\\Users\\ASUS\\OneDrive\\Deskt', 424, 20.5)}</div>
      <div class="appmenu">
        <div class="logo">{@render fit('OPEN', 74, 26.5)}<em>{@render fit('PROJ', 67, 26.5)}</em><sup>™</sup></div>
        {#each [['File', 31], ['Edit', 35], ['View', 43], ['Insert', 49], ['Tools', 50], ['Project', 65], ['Help', 44]] as [t, w]}
          {@render fit(t, w, 20)}
        {/each}
      </div>
      <div class="apptools" style:grid-template-columns={toolTracks}>
        {#each tools as t, i}
          <div class="tool" class:first={i === 0}>
            {#if t.n === '|'}<hr />{:else}{@render ic(t.n, t.w, t.h)}{/if}
          </div>
        {/each}
      </div>
      <div class="content">
        <aside>
          <div class="grip"></div>
          {#each Array(8) as _, i}
            <div class="view" class:active={i === 0} class:tall={i === 6}>{@render ic('v' + i, 44, i === 6 ? 36 : 33)}</div>
          {/each}
          <div class="tail"></div>
        </aside>
        <div class="table">
          <div class="row head"><div class="num"></div><div class="ind mid">{@render ic('badge', 18, 18)}</div><div class="name">Name</div><div></div></div>
          {#each rows as r, i}
            <div class="row">
              <div class="num">{i + 1}</div>
              <div class="ind">{#if r[2]}{@render ic(r[2], r[2] === 'check' ? 18 : 22, 20)}{/if}{#if r[3]}{@render ic(r[3], r[3] === 'check' ? 18 : 22, 20)}{/if}</div>
              <div class="name lv{r[1]}">{#if r[1] === 0}<s></s>{/if}<span>{r[0]}</span></div>
              <div></div>
            </div>
          {/each}
          <div class="row"><div class="num"></div><div class="ind"></div><div class="name"></div><div></div></div>
        </div>
        <div class="split"><svg width="7" height="30" viewBox="0 0 7 30"><path d="M6 3v7L2 6.500zM2 19v7l4-3.500z" /></svg></div>
        <svg class="gantt" width="1452" height="615" viewBox="453 343 1452 615">
          <defs>
            <pattern id="wk" width="28" height="28" patternUnits="userSpaceOnUse"><path d={weekendDots} fill="#c8c8c8" /></pattern>
            <pattern id="hb" width="14" height="14" patternUnits="userSpaceOnUse"><rect width="14" height="14" fill="#00f" /><path d={barDots} fill="#fff" /></pattern>
            <pattern id="hr" width="14" height="14" patternUnits="userSpaceOnUse"><rect width="14" height="14" fill="#f00" /><path d={barDots} fill="#fff" /></pattern>
          </defs>
          <rect x="453" y="343" width="1452" height="615" fill="#fff" />
          <rect x="453" y="346" width="1452" height="40" fill="#f0f0f0" />
          <path d="M453 344.500h1452M454 343v615" stroke="#7d818c" stroke-width="2.500" />
          <path d="M456 367.500h1449M456 386.500h1449" stroke="#555" stroke-width="1.300" />
          {#each weeks as w, i}
            <rect x={Math.round(weekX(i) - 20.5)} y="388" width="41" height="570" fill="url(#wk)" />
            <path d="M{weekX(i)} 349v37" stroke="#000" stroke-width="1.600" />
            <path d="M{weekX(i)} 387v571" stroke="#777" stroke-width="1.400" stroke-dasharray="1.400 1.400" />
            <text class="wk" x={weekX(i) + 1.5} y="362" textLength={w[1] === ' ' || w.includes('Jul') ? 71 : 80} lengthAdjust="spacingAndGlyphs">{w}</text>
          {/each}
          {#each days as d}
            {#if d.x > 460}<path d="M{d.x} 368v18" stroke="#000" stroke-width="1.300" />{/if}
            <text class="day" x={d.x + 1.5} y="382">{d.d}</text>
          {/each}
          <path d="M525 388v570" stroke="#777" stroke-width="1.500" stroke-dasharray="3 3.500" />
          <path d="M616.500 388v570" stroke="#0e0" stroke-width="1" stroke-dasharray="2 2" />
          {#each bars as [a, b, y, k]}
            <rect x={a + 0.75} y={y + 0.75} width={b - a - 1.5} height="15.500" fill={k === 2 ? 'url(#hr)' : 'url(#hb)'} stroke={k === 2 ? '#f00' : '#00f'} stroke-width="1.500" />
            {#if k === 1}<rect x={a} y={y + 5} width={b - a} height="6" />{/if}
          {/each}
          {#each labels as [x, y, t]}
            <text class="res" {x} {y} textLength={labelW[t]} lengthAdjust="spacingAndGlyphs">{t}</text>
          {/each}
          {#each summaries as [a, b, y]}
            <path d="M{a} {y}H{b}v8L{b - 7} {y + 14.5}l-6.500-6.500H{a + 13.5}L{a + 7} {y + 14.5}L{a} {y + 8}z" />
          {/each}
          {#each links as [a, y, b, e]}
            <path d="M{a} {y}H{b}V{e}" fill="none" stroke="#000" stroke-width="1.600" />
            <path d="M{b - 6.5} {e - 9}l4 3h5.500l3.500-3-3 5L{b} {e}l-3.500-4z" stroke="#000" stroke-width=".600" />
          {/each}
          <rect x="519.250" y="386.250" width="103.500" height="164" fill="none" stroke="#000" stroke-width="6.500" />
          <rect x="675.500" y="401.500" width="231" height="90" fill="none" stroke="#222" stroke-width="1.200" stroke-dasharray="5 4" />
          {#each handles as [x, y]}<rect x={x - 3} y={y - 3} width="6" height="6" fill="#fff" stroke="#222" stroke-width="1.300" />{/each}
          {#each note as [y, w, t]}<text class="note" x="682" {y} textLength={w} lengthAdjust="spacingAndGlyphs">{t}</text>{/each}
        </svg>
      </div>
    </div>
    <div class="vscroll"><svg width="15" height="741" viewBox="0 0 15 741"><path d="M7.500 6l5 8h-10zM7.500 735l5-8h-10z" fill="#a4a4a4" /><rect x="3.500" y="40" width="8" height="332" rx="4" fill="#a0a0a0" /></svg></div>
    <div class="textbar">
      <div class="dd font">{@render fit('Franklin Gothic Heavy', 168, 16.5)}{@render ic('chev', 11, 6)}</div>
      <div class="dd num9">{@render fit('9', 9, 16.5)}{@render ic('chev', 11, 6)}</div>
      <i></i>
      <div class="tb on">{@render ic('bold', 17, 19)}</div>
      <div class="tb">{@render ic('italic', 18, 19)}</div>
      <div class="tb">{@render ic('under', 17, 19)}</div>
      <div class="tb">{@render ic('strike', 18, 19)}</div>
      <i class="s2"></i>
      <div class="tb on">{@render ic('left', 20, 16)}</div>
      <div class="tb">{@render ic('center', 20, 16)}</div>
      <div class="tb">{@render ic('right', 20, 16)}</div>
      <i class="s3"></i>
      <div class="box"></div>
      {@render fit('Background fill', 115, 16.5)}
    </div>
  </main>
  <div class="hscroll"><svg width="1905" height="15" viewBox="0 0 1905 15"><path d="M6 7.500l7-5v10zM1898 7.500l-7-5v10z" fill="#a4a4a4" /><rect x="22" y="3.500" width="1298" height="8" rx="4" fill="#a0a0a0" /></svg></div>

  <footer class="status">
    <div class="cell c1">{@render ic('cursor', 11, 16)}</div>
    <div class="cell c2">{@render ic('dashed', 15, 15)}{@render fit('166 × 64px', 74, 14.4)}</div>
    <div class="cell c3">{@render ic('artboard', 15, 15)}{@render fit('1920 × 1080px', 97, 14.4)}</div>
    <div class="cell c4">{@render ic('save', 20, 20)}{@render fit('Size: 259.2KB', 88, 14.4)}</div>
    <div class="zoomset">
      {@render ic('focus', 19, 15)}
      <div class="pct">{@render fit('139%', 35, 14.4)}{@render ic('chev', 11, 6)}</div>
      {@render ic('zoomout', 20, 19)}
      <svg class="slider" width="163" height="28" viewBox="0 0 163 28"><rect y="11.500" width="163" height="5" rx="2.500" fill="#979797" /><rect y="11.500" width="30" height="5" rx="2.500" fill="#dc9be6" /><circle cx="30" cy="14" r="13" fill="#454545" /><circle cx="30" cy="14" r="6.500" fill="#dc9be6" /></svg>
      {@render ic('zoomin', 20, 19)}
    </div>
  </footer>

  <footer class="taskbar">
    <div class="wid">{@render ic('widgets', 30, 28)}</div>
    <div class="win">{@render ic('start', 30, 29)}</div>
    <div class="searchbox">{@render ic('search', 20, 20)}{@render fit('Search', 52, 16.5)}<div class="qk">{@render ic('quokka', 52, 33)}</div></div>
    <div class="apps">
      {#each [['explorer', 30, 27, 1], ['edge', 30, 30], ['mysql', 28, 23], ['appwin', 30, 23], ['notepad', 23, 30], ['spotify', 29, 29], ['paint', 28, 29, 2], ['photos', 27, 27, 1]] as [n, w, h, m]}
        <div class="app" class:cur={m === 2} class:run={m === 1}>{@render ic(n, w, h)}</div>
      {/each}
    </div>
    <div class="tray">
      {@render ic('up', 14, 8)}
      <div class="cloud">{@render ic('cloud', 21, 18)}</div>
      <div class="lang">{@render fit('ENG', 29, 14.4)}{@render fit('IN', 14, 14.4)}</div>
      <div class="sys">{@render ic('globe', 21, 21)}{@render ic('sound', 21, 17)}{@render ic('battery', 21, 14)}</div>
      <div class="clock">{@render fit('11:47', 36, 14.4)}{@render fit('02-08-2024', 78, 14.4)}</div>
      {@render ic('bell', 17, 19)}
      <div class="cop">{@render ic('copilot', 30, 29)}</div>
    </div>
  </footer>
</div>

<style>
  :global(body) { margin: 0; background: #202022; overflow: hidden; }
  .screen { width: 1920px; height: 1080px; display: flex; flex-direction: column; overflow: hidden; color: #fff; font-family: "Open Sans", "Noto Sans", sans-serif; }
  .screen :global(svg) { display: block; flex: none; }
  .fit { overflow: visible; fill: currentColor; }
  .titlebar { height: 29px; flex: none; display: flex; align-items: center; background: #1b2129; padding: 0 26px 0 3px; box-sizing: border-box; }
  .doc { margin-left: 5px; }
  .wbtns { margin-left: auto; display: flex; gap: 46.5px; }
  .menubar { height: 51px; flex: none; display: flex; align-items: center; background: #1b2129; padding: 2px 19px 0 17px; box-sizing: border-box; border-bottom: 1px solid #181b1d; }
  .menubar > span:nth-of-type(2) { margin-left: 38px; }
  .menubar > span:nth-of-type(3) { margin-left: 34px; }
  .menubar i { width: 1px; height: 29px; background: #343a40; margin-left: 21px; }
  .msave { margin-left: 17px; }
  .menubar .msave + i { margin-left: 18px; }
  .mundo { margin-left: 19px; }
  .mredo { margin-left: 31px; color: #5c6168; }
  .mgear { margin-left: auto; }
  .ribbon { height: 137px; flex: none; display: flex; box-sizing: border-box; padding-top: 6px; background: linear-gradient(90deg, #24292c 0, #24292d 420px, #252a33 560px, #24292d 700px, #242830 920px, #242831 1600px, #24282c 1700px); border-bottom: 1px solid #191b1c; }
  .group { height: 125px; box-sizing: border-box; border-right: 1px solid #3a3f44; display: flex; flex-direction: column; }
  .body { height: 100px; flex: none; }
  .cap { color: #c9cccf; display: flex; justify-content: center; }
  .cap.nudge { margin-right: 2px; }
  .g-sel { width: 93px; }
  .g-img { width: 198px; }
  .g-tools { width: 171px; }
  .g-brush { width: 84px; }
  .g-shapes { width: 356px; }
  .g-colors { width: 441px; }
  .g-layers { width: 80px; border: 0; }
  .stack { display: flex; flex-direction: column; align-items: center; padding-top: 26px; box-sizing: border-box; gap: 13px; }
  .imggrid { display: grid; grid-template: 50px 50px / 50px 50px 7px 86px; padding-left: 10px; place-items: center; }
  .resize { grid-row: 1 / 3; grid-column: 4; margin-left: 5px; }
  .toolgrid { display: grid; grid-template: 50px 50px / 50px 50px 50px; padding-left: 10px; place-items: center; }
  .on { border: 1px solid #cf96dc; border-radius: 5px; background: #2e3236; width: 40px; height: 40px; box-sizing: border-box; display: grid; place-items: center; }
  .shapesrow { display: flex; padding-left: 10px; }
  .shapebox { width: 218px; height: 100px; box-sizing: border-box; border: 1px solid #383c40; border-radius: 5px; padding: 4px 0 0 4px; display: grid; grid-template-columns: repeat(7, 28px); grid-auto-rows: 28px; place-items: center; align-content: start; justify-content: start; overflow: hidden; }
  .dim { color: #686c70; }
  .pairs { display: grid; grid-template: 50px 50px / 50px 6px; place-items: center; padding-left: 1px; }
  .sizes { margin-left: 20px; }
  .sizes { padding-top: 29px; gap: 15px; }
  .g-shapes .cap { margin-left: -1px; }
  .colorrow { display: flex; padding-left: 15px; }
  .current { display: flex; flex-direction: column; align-items: center; gap: 14px; padding-top: 5px; }
  .ring { width: 40px; height: 40px; box-sizing: border-box; border: 2px solid #b07fbd; border-radius: 50%; display: grid; place-items: center; }
  .ring b { width: 28px; height: 28px; border-radius: 50%; background: #000; border: 1px solid #777; }
  .current u { width: 30px; height: 30px; border-radius: 50%; background: #fff; }
  .swatches { display: grid; grid-template-columns: repeat(10, 30px); grid-auto-rows: 30px; place-items: center; align-content: start; padding-top: 4px; margin-left: 10px; }
  .swatches span { width: 20px; height: 20px; box-sizing: border-box; border: 1px solid #74787c; border-radius: 50%; }
  .wheel { width: 30px; height: 30px; border-radius: 50%; margin: 37px 0 0 18.500px; position: relative; background: radial-gradient(circle, #fff 0, #fff0 65%), conic-gradient(#8f0, #0f8, #0ff 25%, #00f 48%, #f0f 62%, #f00 76%, #f80 85%, #ff0 92%, #8f0); }
  .plus { position: absolute; left: 19.500px; top: -3.500px; }
  .lay { padding-top: 37px; }
  .workspace { height: 741px; flex: none; display: flex; position: relative; background: linear-gradient(#1b2129, #1c2228 55%, #222223 80%); box-sizing: border-box; padding-left: 39px; }
  .canvas { width: 1866px; flex: none; background: #fff; color: #111; border-left: 1px solid #888; box-sizing: border-box; overflow: hidden; }
  .apptitle { height: 38px; background: #eef3f8; display: flex; align-items: center; gap: 11.500px; padding: 0 0 2px 5px; box-sizing: border-box; }
  .appmenu { height: 45px; display: flex; align-items: center; gap: 13px; padding-left: 10px; padding-top: 3px; box-sizing: border-box; }
  .logo { display: flex; align-items: center; font-family: Lato, sans-serif; font-weight: 700; color: #555753; width: 155px; margin-top: -1px; gap: 1px; }
  .logo em { color: #ea2a35; font-style: normal; }
  .logo sup { font-size: 9px; align-self: flex-start; margin: 4px 0 0 3px; }
  .apptools { height: 43px; background: #f0f0f0; display: grid; padding-left: 4px; align-items: center; }
  .tool { display: flex; justify-content: center; align-items: center; width: 30px; justify-self: end; margin-right: -15px; height: 28px; border-radius: 4px; }
  .tool.first { background: #d8ebfb; }
  .tool hr { width: 1.500px; height: 31px; border: 0; margin: 0; background: #888; }
  .content { height: 615px; display: flex; }
  aside { width: 56px; height: 615px; background: #f0f0f0; display: flex; flex-direction: column; align-items: center; flex: none; }
  .grip { width: 54px; height: 17px; background: radial-gradient(circle, #b5b5b5 1px, transparent 1.600px) 0 4px / 6px 6px repeat-x; flex: none; }
  .view { width: 44px; height: 33px; margin: 5px 0; background: #fff; box-shadow: inset 0 0 0 1.500px #000; flex: none; }
  .view.active { margin-top: 4px; outline: 4px solid #cbe4fa; }
  .view.tall { height: 36px; }
  .tail { flex: 1; width: 2px; background: #8a8a8a; align-self: flex-start; margin: 4px 0 0 6px; }
  .table { width: 350px; flex: none; border-left: 3px solid #73777f; border-top: 2px solid #73777f; box-sizing: border-box; height: 615px; overflow: hidden; font: 15.800px "DejaVu Sans", sans-serif; color: #15151f; }
  .row { display: grid; grid-template-columns: 56px 69px 209px 1fr; height: 26.400px; box-sizing: border-box; border-right: 2px solid #999; }
  .row > div { border-right: 1px solid #bdbdbd; border-bottom: 1.500px solid #bdbdbd; box-sizing: border-box; display: flex; align-items: center; overflow: hidden; min-width: 0; white-space: nowrap; }
  .row.head { height: 42.400px; }
  .row.head > div { background: #f0f0f0; border-right-width: 2px; padding-top: 2px; }
  .row .num { background: #f0f0f0; justify-content: center; border-right-width: 2px; letter-spacing: -0.400px; }
  .row .name { border-right-width: 2px; padding-top: 1px; }
  .row .lv1, .row .lv2 { letter-spacing: -0.030px; }
  .row.head .name { justify-content: center; font-weight: 700; letter-spacing: -0.800px; padding-top: 3px; }
  .ind { padding-left: 1px; gap: 12px; }
  .ind.mid { justify-content: center; }
  .ind > :global(svg:first-child[width="18"]) { margin-left: 2px; }
  .name s { width: 12px; height: 12px; flex: none; box-sizing: border-box; border: 1.500px solid #000; margin: 0 3px 0 2px; background: linear-gradient(#000, #000) center / 6px 1.500px no-repeat; }
  .row .lv0 { font-weight: 700; letter-spacing: -0.650px; }
  .lv1 { padding-left: 17px; }
  .lv2 { padding-left: 30px; }
  .split { width: 7px; flex: none; background: #f0f0f0; }
  .gantt pattern path { shape-rendering: crispEdges; }
  .wk { font: 15.500px "DejaVu Sans", sans-serif; }
  .day { font: 15.500px "DejaVu Sans", sans-serif; }
  .res { font: 700 16px "Liberation Serif", serif; fill: #111; }
  .note { font: 900 15.500px Inter, sans-serif; }
  .vscroll { width: 15px; flex: none; background: #343435; border-radius: 8px; box-shadow: 0 0 0 8px #f6f6f6; clip-path: inset(0); }
  .hscroll { height: 15px; flex: none; background: linear-gradient(90deg, #343435 1890px, #fff 1890px); }
  .hscroll svg { background: #343435; border-radius: 8px; }
  .textbar { position: absolute; left: 502px; top: 0; width: 917px; height: 60px; box-sizing: border-box; padding-left: 10px; border-radius: 8px; background: linear-gradient(90deg, #323537, #353538); box-shadow: 0 4px 12px #0005; display: flex; align-items: center; }
  .dd { height: 40px; border-radius: 5px; background: #404244; display: flex; align-items: center; justify-content: space-between; box-sizing: border-box; padding: 0 20px 0 15px; }
  .dd.font { width: 238px; }
  .dd.num9 { width: 89px; margin-left: 10px; padding-right: 18px; }
  .textbar i { width: 1px; height: 40px; background: #484b4d; margin: 0 12px 0 14px; }
  .tb { width: 40px; height: 40px; display: grid; place-items: center; margin-right: 10px; }
  .tb.on { background: #3a3c3e; }
  .textbar .s2 { margin: 0 12px 0 3px; }
  .textbar .s3 { margin: 0 12px 0 3px; }
  .box { width: 25px; height: 25px; box-sizing: border-box; border: 1px solid #a5a5a5; border-radius: 5px; margin-right: 10px; background: #2e2f31; }
  .status { height: 48px; flex: none; box-sizing: border-box; padding-top: 1px; background: #202022; border-bottom: 1px solid #48494b; display: flex; align-items: center; color: #eee; }
  .cell { height: 26px; box-sizing: border-box; display: flex; align-items: center; border-right: 1px solid #38383a; }
  .c1 { width: 169px; padding-left: 17px; }
  .c2 { width: 165px; padding-left: 11px; gap: 9px; }
  .c3 { width: 165px; padding-left: 11px; gap: 9px; }
  .c4 { border: 0; padding-left: 16px; gap: 10px; }
  .zoomset { margin-left: auto; padding-right: 15px; display: flex; align-items: center; }
  .pct { width: 115px; height: 36px; box-sizing: border-box; margin: 0 21px 0 20px; padding: 0 19px 0 15px; border-radius: 5px; background: #2c2d2e; display: flex; align-items: center; justify-content: space-between; }
  .slider { margin: 0 15px 0 14px; }
  .taskbar { height: 59px; flex: none; display: flex; align-items: center; background: linear-gradient(90deg, #1f212b, #20232b 600px, #1d2a35 760px, #23282b 920px, #1d2427 1300px, #1c2326); }
  .wid { width: 558px; padding-left: 26px; }
  .win { width: 47px; }
  .searchbox { width: 274px; height: 40px; box-sizing: border-box; border: 1px solid #55575d; border-radius: 20px; background: #3d3e45; display: flex; align-items: center; gap: 12px; padding: 0 9px 0 13px; color: #ddd; }
  .qk { margin-left: auto; }
  .apps { display: flex; gap: 5px; margin-left: 6px; }
  .app { width: 50px; height: 50px; display: grid; place-items: center; border-radius: 5px; position: relative; }
  .app.cur { background: #30383c; }
  .app.run::after, .app.cur::after { content: ""; position: absolute; bottom: 1px; left: 22px; width: 7px; height: 4px; border-radius: 2px; background: #999; }
  .app.cur::after { left: 15px; width: 20px; background: #d99be4; }
  .tray { margin-left: auto; padding-right: 25px; display: flex; align-items: center; }
  .cloud { margin-left: 23px; padding-top: 3px; }
  .lang { width: 30px; margin-left: 22px; display: flex; flex-direction: column; align-items: center; }
  .sys { display: flex; align-items: center; gap: 9px; margin-left: 22px; }
  .clock { display: flex; flex-direction: column; align-items: flex-end; margin: 0 10px 0 19px; }
  .cop { margin-left: 23px; }
</style>
